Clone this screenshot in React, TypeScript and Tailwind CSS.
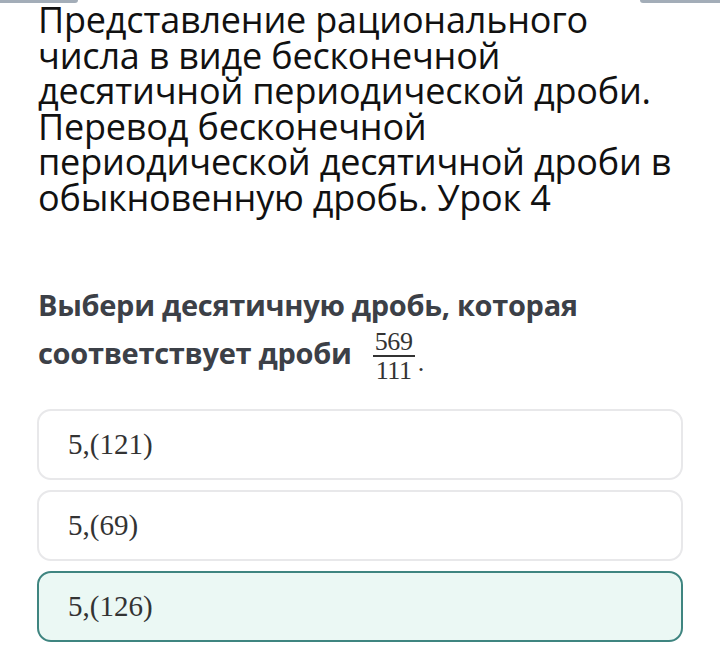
import React from "react";

const serif = { fontFamily: '"Liberation Serif", "DejaVu Serif", serif' };

function Option({ label, selected }: { label: string; selected?: boolean }) {
  return (
    <div
      className={
        selected
          ? "h-[71px] rounded-[14px] border-2 border-[#3f8580] bg-[#ebf8f4] flex items-center px-[29px]"
          : "h-[71px] rounded-[14px] border-2 border-[#e8e8ea] bg-white flex items-center px-[29px]"
      }
    >
      <span className="text-[29px] text-[#333] font-['Liberation_Serif',serif]">{label}</span>
    </div>
  );
}

export default function App() {
  return (
    <div className="relative w-[720px] h-[660px] bg-white overflow-hidden">
      <div className="absolute left-0 top-0 w-[78px] h-[3px] bg-[#a3adb8] rounded-br-[3px]" />
      <div className="absolute right-0 top-0 w-[80px] h-[3px] bg-[#a3adb8] rounded-bl-[3px]" />
      <div className="pl-[38px] pr-[20px] pt-[2px]">
        <h1 className="text-[36px] leading-[35.5px] text-[#111] font-['Open_Sans',sans-serif] font-normal tracking-[-0.2px] whitespace-nowrap">
          Представление рационального
          <br />
          числа в виде бесконечной
          <br />
          десятичной периодической дроби.
          <br />
          Перевод бесконечной
          <br />
          периодической десятичной дроби в
          <br />
          обыкновенную дробь. Урок 4
        </h1>
        <div className="mt-[66px] text-[29px] leading-[48px] font-bold text-[#3c4047] font-['Open_Sans',sans-serif] tracking-[-0.3px] whitespace-nowrap">
          Выбери десятичную дробь, которая
          <br />
          соответствует дроби{" "}
          <span className="inline-flex items-center align-middle ml-[14px]" style={serif}>
            <span className="inline-flex flex-col items-center font-normal text-[26px] leading-[23px] text-[#333]">
              <span>569</span>
              <span className="w-[42px] h-[1.5px] bg-[#333] my-[2px]" />
              <span>111</span>
            </span>
            <span className="font-normal text-[26px] leading-[23px] text-[#333] self-center mt-[12px] ml-[3px]">.</span>
          </span>
        </div>
      </div>
      <div className="mt-[27px] mx-[37px] flex flex-col gap-[10px]">
        <Option label="5,(121)" />
        <Option label="5,(69)" />
        <Option label="5,(126)" selected />
      </div>
    </div>
  );
}
